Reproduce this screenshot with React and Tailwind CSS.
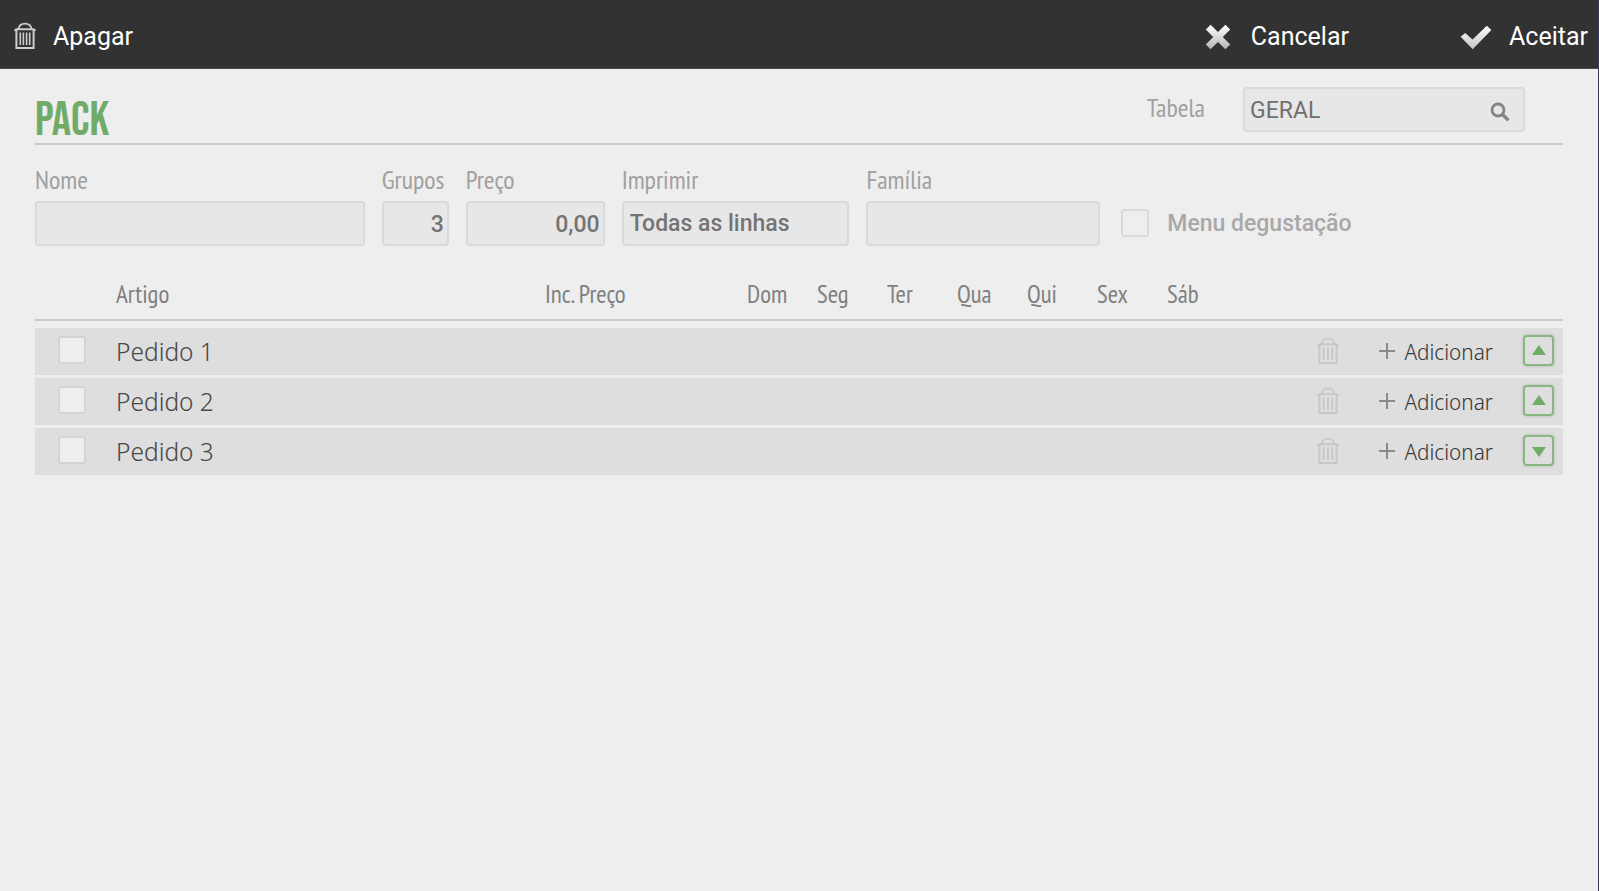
import React from "react";

const labelFont = "font-['PT_Sans_Narrow','Roboto_Condensed',sans-serif]";
const lightFont = "font-['Noto_Sans_Display','Noto_Sans','Open_Sans',sans-serif] font-light";
const fieldBox =
  "h-[45px] w-full min-w-0 appearance-none rounded-[4px] border-2 border-[#dadada] bg-[#e7e7e7] pt-[2px] pr-[3px] pl-[6px] text-[23px] font-medium text-[#747474] outline-none";
const tickBox =
  "block size-7 shrink-0 appearance-none rounded-[3px] border-2 checked:bg-[#70ab68]";

const days = ["Dom", "Seg", "Ter", "Qua", "Qui", "Sex", "Sáb"];

const groups = [
  { name: "Pedido 1", direction: "up" },
  { name: "Pedido 2", direction: "up" },
  { name: "Pedido 3", direction: "down" },
];

function TrashIcon({ slats, slatWidth }) {
  return (
    <svg viewBox="0 0 22 28" className="h-7 w-[22px]" fill="none" stroke="currentColor" aria-hidden="true">
      <path d="M4.500 7C5 3.200 7 1.600 11 1.600S17 3.200 17.500 7" strokeWidth="1.800" />
      <path d="M.6 8.800 2.400 7.200h17.200l1.800 1.600" strokeWidth="2" />
      <path d="M2.400 8v18h17.200V8" strokeWidth="2" />
      <path d={slats} strokeWidth={slatWidth} />
    </svg>
  );
}

function CrossIcon() {
  return (
    <svg viewBox="0 0 26 26" className="size-[26px]" aria-hidden="true">
      <defs>
        <linearGradient id="crossFill" x1="0" y1="0" x2="0" y2="1">
          <stop offset="0" stopColor="#ffffff" />
          <stop offset="1" stopColor="#b4b4b4" />
        </linearGradient>
      </defs>
      <path
        fill="url(#crossFill)"
        d="M5.600.8 13 8 20.400.8 25.200 5.600 17.800 13 25.200 20.400 20.400 25.200 13 18 5.600 25.200.8 20.400 8.200 13 .8 5.600Z"
      />
    </svg>
  );
}

function CheckIcon() {
  return (
    <svg viewBox="0 0 32 25" className="h-[25px] w-8" aria-hidden="true">
      <defs>
        <linearGradient id="checkFill" x1="0" y1="0" x2="0" y2="1">
          <stop offset="0" stopColor="#ffffff" />
          <stop offset="1" stopColor="#c4c4c4" />
        </linearGradient>
      </defs>
      <path fill="url(#checkFill)" d="M.6 11.800 5.200 8l7.300 6.400L26.800.8 31.400 5 12.700 24.200Z" />
    </svg>
  );
}

function SearchIcon() {
  return (
    <svg viewBox="0 0 20 20" className="size-5" fill="none" stroke="#848484" aria-hidden="true">
      <circle cx="8" cy="8" r="6" strokeWidth="2.800" />
      <path d="m12.400 12.400 6 6" strokeWidth="3.400" />
    </svg>
  );
}

function Label({ htmlFor, children }) {
  return (
    <label htmlFor={htmlFor} className={`block h-[39px] text-[26px] leading-9 whitespace-nowrap text-[#a0a0a0] ${labelFont}`}>
      {children}
    </label>
  );
}

export default function App() {
  return (
    <div className="min-h-screen border-r border-[#3a3a60] bg-[#eee] font-[Roboto,sans-serif]">
      <header className="flex h-[69px] items-center justify-between border-b border-[#4a4a4a] bg-[#323232] pt-[6px] pr-[10px] pl-[14px] text-[25px] text-white">
        <button type="button" className="flex items-center gap-[17px]">
          <span className="pb-[2px] text-[#cdcdcd]">
            <TrashIcon slats="M6.300 10.500v12.500M9.400 10.500v12.500M12.600 10.500v12.500M15.700 10.500v12.500" slatWidth="1.600" />
          </span>
          Apagar
        </button>
        <div className="flex items-center gap-[111px]">
          <button type="button" className="flex items-center gap-5">
            <CrossIcon />
            Cancelar
          </button>
          <button type="button" className="flex items-center gap-[17px]">
            <CheckIcon />
            Aceitar
          </button>
        </div>
      </header>

      <main className="px-[35px]">
        <div className="flex h-[76px] items-start justify-between border-b-2 border-[#cacaca] pt-[18px]">
          <h1 className="pt-[10px] font-['Bebas_Neue','Roboto_Condensed',sans-serif] text-[48px] leading-[48px] font-normal text-[#70ab68]">
            PACK
          </h1>
          <div className="flex items-center gap-[38px] pr-[38px]">
            <label htmlFor="tabela" className={`pb-1 text-[26px] leading-9 text-[#a0a0a0] ${labelFont}`}>
              Tabela
            </label>
            <div className="flex h-[45px] w-[282px] items-center rounded-[4px] border-2 border-[#dadada] bg-[#e7e7e7] pt-1 pr-[13px] pl-[5px]">
              <input
                id="tabela"
                defaultValue="GERAL"
                className="min-w-0 flex-1 bg-transparent text-[23px] text-[#707070] outline-none"
              />
              <button type="button" aria-label="Procurar tabela">
                <SearchIcon />
              </button>
            </div>
          </div>
        </div>

        <div className="grid grid-cols-[330fr_67fr_139fr_228fr_234fr_446fr] items-end gap-[17px] pt-[17px]">
          <div>
            <Label htmlFor="nome">Nome</Label>
            <input id="nome" className={fieldBox} />
          </div>
          <div>
            <Label htmlFor="grupos">Grupos</Label>
            <input id="grupos" defaultValue="3" className={`${fieldBox} text-right`} />
          </div>
          <div>
            <Label htmlFor="preco">Preço</Label>
            <input id="preco" defaultValue="0,00" className={`${fieldBox} text-right`} />
          </div>
          <div>
            <Label htmlFor="imprimir">Imprimir</Label>
            <select id="imprimir" className={fieldBox}>
              <option>Todas as linhas</option>
            </select>
          </div>
          <div>
            <Label htmlFor="familia">Família</Label>
            <input id="familia" className={fieldBox} />
          </div>
          <div className="flex h-[45px] items-center gap-[18px] pl-1">
            <input id="degustacao" type="checkbox" className={`${tickBox} mb-[2px] border-[#dadada]`} />
            <label htmlFor="degustacao" className="pt-[2px] text-[23px] font-medium text-[#a8a8a8]">
              Menu degustação
            </label>
          </div>
        </div>

        <table className="mt-6 w-full table-fixed border-separate border-spacing-0">
          <colgroup>
            <col className="w-[81px]" />
            <col />
            <col className="w-[202px]" />
            {days.map((day) => (
              <col key={day} className="w-[70px]" />
            ))}
            <col className="w-[326px]" />
          </colgroup>
          <thead className={`text-left text-[25px] leading-9 text-[#808080] ${labelFont}`}>
            <tr className="h-[51px] [&>th]:border-b-2 [&>th]:border-[#c8c8c8] [&>th]:px-0 [&>th]:pt-0 [&>th]:pb-[2px] [&>th]:font-normal">
              <th aria-label="Seleção" />
              <th>Artigo</th>
              <th>Inc. Preço</th>
              {days.map((day) => (
                <th key={day}>{day}</th>
              ))}
              <th aria-label="Ações" />
            </tr>
          </thead>
          <tbody className="before:block before:h-[7px] before:content-['']">
            {groups.map((group) => (
              <tr
                key={group.name}
                className="h-[50px] [&>td]:border-b-[3px] [&>td]:border-[#eee] [&>td]:bg-[#dedede] [&>td]:px-0 [&>td]:pt-0 [&>td]:pb-[2px]"
              >
                <td>
                  <input
                    type="checkbox"
                    aria-label={group.name}
                    className={`${tickBox} mb-[2px] ml-[23px] border-[#d4d4d4] bg-[#eee]`}
                  />
                </td>
                <td colSpan={9} className={`text-[26px] leading-9 text-[#4a4a4a] ${lightFont}`}>
                  {group.name}
                </td>
                <td>
                  <div className="flex items-center justify-end pr-[9px]">
                    <button type="button" aria-label={`Apagar ${group.name}`} className="mr-10 text-[#c8c8c8]">
                      <TrashIcon slats="M6.800 10.500v12.500M11 10.500v12.500M15.200 10.500v12.500" slatWidth="2" />
                    </button>
                    <button
                      type="button"
                      className={`mr-[30px] flex items-center gap-[9px] text-[22px] leading-8 text-[#3a3a3a] ${lightFont}`}
                    >
                      <svg viewBox="0 0 16 16" className="size-4" stroke="#8a8a8a" strokeWidth="2" aria-hidden="true">
                        <path d="M8 0v16M0 8h16" />
                      </svg>
                      Adicionar
                    </button>
                    <button
                      type="button"
                      aria-label={`Abrir ou fechar ${group.name}`}
                      className="flex size-[31px] items-center justify-center rounded-[4px] border-2 border-[#86b880] shadow-[0_0_3px_#b0b0b0]"
                    >
                      <svg viewBox="0 0 14 12" className="h-3 w-[14px]" fill="#70ab68" aria-hidden="true">
                        <path d={group.direction === "up" ? "M0 10 7 0l7 10Z" : "M0 2h14L7 12Z"} />
                      </svg>
                    </button>
                  </div>
                </td>
              </tr>
            ))}
          </tbody>
        </table>
      </main>
    </div>
  );
}
